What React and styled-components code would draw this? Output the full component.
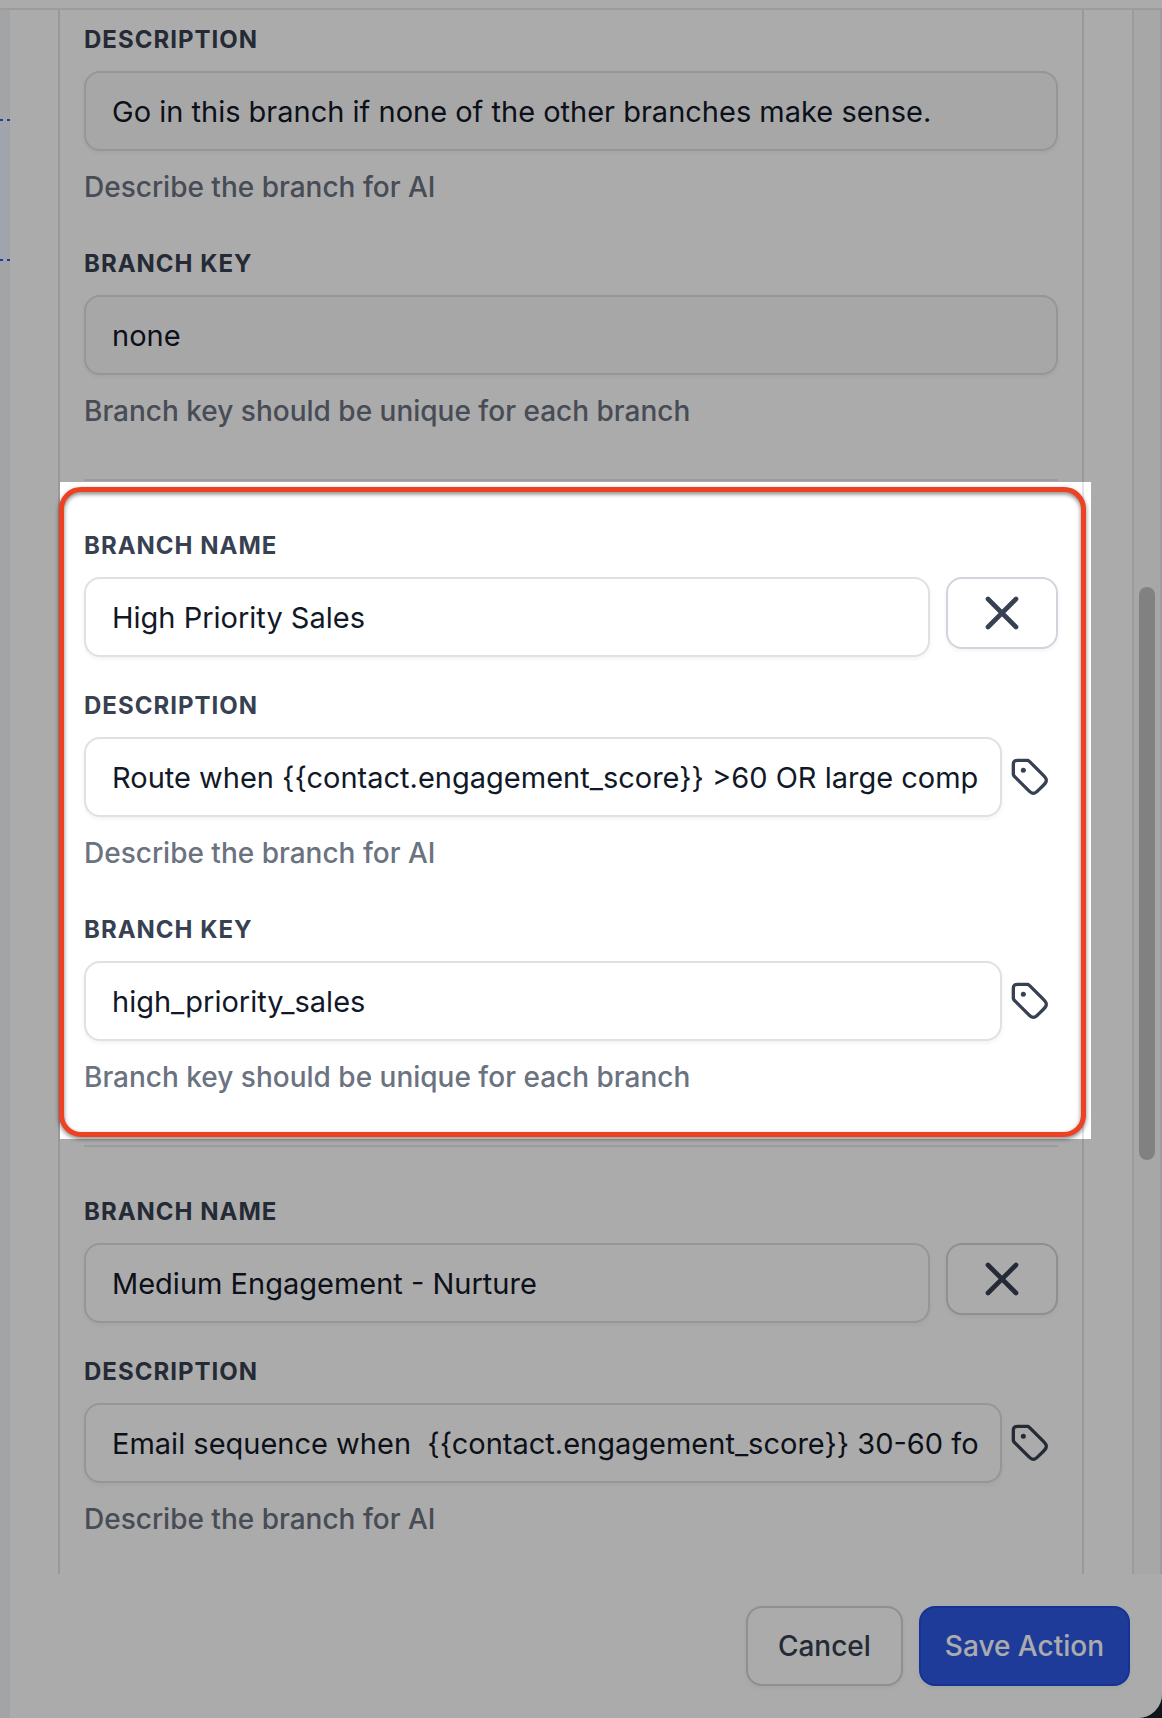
import React, { useId, useState } from "react";
import styled, { createGlobalStyle, css } from "styled-components";

const GlobalStyle = createGlobalStyle`
  *, *::before, *::after { box-sizing: border-box; }
  body {
    margin: 0;
    background: #10151c;
    font-family: Inter, "Liberation Sans", sans-serif;
    font-size: 28px;
    line-height: 40px;
    color: #111827;
  }
  input, button { font: inherit; }
`;

const Page = styled.div`
  position: relative;
  display: flex;
  flex-direction: column;
  min-height: 100vh;
  overflow: hidden;
  background: #fff;
  border-radius: 0 0 24px 0;
`;

const TopBar = styled.header`
  height: 10px;
  border-bottom: 2px solid #e9e9ef;
`;

const Main = styled.div`
  flex: 1;
  display: flex;
`;

const Canvas = styled.aside`
  width: 10px;
  background: #f3f5f8;
`;

const dashes = "repeating-linear-gradient(90deg, #2f5cec 0 3px, transparent 3px 7px)";

const CanvasNode = styled.div`
  height: 142px;
  margin-top: 109px;
  background: ${dashes} top / 100% 2px no-repeat, ${dashes} bottom / 100% 2px no-repeat, #eff6ff;
`;

const Panel = styled.main`
  flex: 1;
  min-width: 0;
  display: flex;
  flex-direction: column;
`;

const ScrollArea = styled.div`
  flex: 1;
  display: flex;
`;

const Form = styled.form`
  flex: 1;
  min-width: 0;
  margin: 0 48px;
  padding: 13px 24px 0;
  border: solid #e5e5ea;
  border-width: 0 2px;
`;

const ScrollTrack = styled.div`
  width: 30px;
  display: grid;
  grid-template-rows: 577fr 573fr 414fr;
  justify-items: center;
  background: #fafafa;
  border: solid #e8e8e8;
  border-width: 0 2px;
`;

const ScrollThumb = styled.div`
  grid-row: 2;
  width: 16px;
  border-radius: 8px;
  background: #c1c1c1;
`;

const Group = styled.section`
  position: relative;
  padding-bottom: ${(p) => (p.$last ? 0 : 48)}px;
  ${(p) =>
    !p.$first &&
    css`
      padding-top: 48px;
      border-top: 2px solid #e9e9ef;
    `}
`;

const FieldBox = styled.div`
  display: flex;
  flex-direction: column;
  &:not(:first-child) { margin-top: ${(p) => (p.$tight ? 32 : 40)}px; }
`;

const Label = styled.label`
  margin-bottom: 14px;
  font-size: 24px;
  line-height: 34px;
  font-weight: 700;
  letter-spacing: 1px;
  text-transform: uppercase;
  color: #374151;
`;

const Row = styled.div`
  display: flex;
  align-items: ${(p) => (p.$top ? "flex-start" : "center")};
  gap: ${(p) => (p.$top ? 16 : 0)}px;
`;

const Input = styled.input`
  flex: 1;
  min-width: 0;
  height: 80px;
  padding: 0 22px 0 26px;
  border: 2px solid #e0e0e6;
  border-radius: 16px;
  background: #fff;
  color: #111827;
  font-size: 29px;
  box-shadow: 0 2px 4px rgba(16, 24, 40, 0.05);
  outline: none;
  &:read-only { background: #fafafa; }
`;

const Help = styled.p`
  margin: 16px 0 0;
  font-weight: 500;
  color: #6b7280;
`;

const Button = styled.button`
  height: 80px;
  padding: 0 ${(p) => (p.$primary ? 24 : 30)}px;
  border: 2px solid ${(p) => (p.$primary ? "#1f4de0" : "#d1d5db")};
  border-radius: 16px;
  background: ${(p) => (p.$primary ? "#2e59e6" : "#fff")};
  color: ${(p) => (p.$primary ? "#fff" : "#374151")};
  font-weight: 500;
  box-shadow: 0 2px 4px rgba(16, 24, 40, 0.05);
`;

const RemoveButton = styled(Button)`
  display: flex;
  align-items: center;
  justify-content: center;
  width: 112px;
  height: 72px;
  padding: 0;
`;

const TagButton = styled.button`
  display: flex;
  padding: 8px;
  border: 0;
  background: none;
  color: #374151;
`;

const Footer = styled.footer`
  display: flex;
  justify-content: flex-end;
  gap: 16px;
  padding: 32px;
`;

const Spotlight = styled.div`
  position: absolute;
  z-index: 1;
  inset: 1px -33px 6px -24px;
  box-shadow: 0 0 0 4000px rgba(0, 0, 0, 0.33);
  pointer-events: none;
`;

const Outline = styled.div`
  position: absolute;
  z-index: 2;
  inset: 6px -28px 8px -25px;
  border: 5px solid #ed4124;
  border-radius: 22px;
  filter: drop-shadow(0 2px 2px rgba(0, 0, 0, 0.5));
  pointer-events: none;
`;

const CloseIcon = () => (
  <svg width="56" height="56" viewBox="0 0 24 24" fill="none" stroke="currentColor" strokeWidth="2" strokeLinecap="round" aria-hidden="true">
    <path d="M18 6L6 18M6 6l12 12" />
  </svg>
);

const TagIcon = () => (
  <svg width="40" height="40" viewBox="0 0 24 24" fill="none" stroke="currentColor" strokeWidth="2" strokeLinecap="round" strokeLinejoin="round" aria-hidden="true">
    <circle cx="8" cy="8" r="1.5" fill="currentColor" stroke="none" />
    <path d="M2 5.2V9.6745C2 10.1637 2 10.4083 2.0553 10.6385C2.1043 10.8425 2.1851 11.0376 2.2947 11.2166C2.4184 11.4184 2.5914 11.5914 2.9373 11.9373L10.6059 19.6059C11.7939 20.7939 12.388 21.388 13.0729 21.6105C13.6755 21.8063 14.3245 21.8063 14.927 21.6105C15.612 21.388 16.2061 20.7939 17.3941 19.6059L19.6059 17.3941C20.7939 16.2061 21.388 15.612 21.6105 14.927C21.8063 14.3245 21.8063 13.6755 21.6105 13.0729C21.388 12.388 20.7939 11.7939 19.6059 10.6059L11.9373 2.9373C11.5914 2.5914 11.4184 2.4184 11.2166 2.2947C11.0376 2.1851 10.8425 2.1043 10.6385 2.0553C10.4083 2 10.1637 2 9.6745 2H5.2C4.0799 2 3.5198 2 3.092 2.218C2.7157 2.4097 2.4097 2.7157 2.218 3.092C2 3.5198 2 4.0799 2 5.2Z" />
  </svg>
);

function Field({ label, value, help, tag, removable, readOnly, tight }) {
  const id = useId();
  const [text, setText] = useState(value);
  return (
    <FieldBox $tight={tight}>
      <Label htmlFor={id}>{label}</Label>
      <Row $top={removable}>
        <Input id={id} value={text} readOnly={readOnly} onChange={(e) => setText(e.target.value)} />
        {removable && (
          <RemoveButton type="button" aria-label="Remove branch">
            <CloseIcon />
          </RemoveButton>
        )}
        {tag && (
          <TagButton type="button" aria-label="Insert tag">
            <TagIcon />
          </TagButton>
        )}
      </Row>
      {help && <Help>{help}</Help>}
    </FieldBox>
  );
}

const DESCRIPTION_HELP = "Describe the branch for AI";
const KEY_HELP = "Branch key should be unique for each branch";

export default function App() {
  return (
    <>
      <GlobalStyle />
      <Page>
        <TopBar />
        <Main>
          <Canvas>
            <CanvasNode />
          </Canvas>
          <Panel>
            <ScrollArea>
              <Form id="branches">
                <Group $first>
                  <Field label="Description" value="Go in this branch if none of the other branches make sense." help={DESCRIPTION_HELP} readOnly />
                  <Field label="Branch key" value="none" help={KEY_HELP} readOnly />
                </Group>
                <Group>
                  <Field label="Branch name" value="High Priority Sales" removable />
                  <Field label="Description" value="Route when {{contact.engagement_score}} >60 OR large comp" help={DESCRIPTION_HELP} tag tight />
                  <Field label="Branch key" value="high_priority_sales" help={KEY_HELP} tag />
                  <Spotlight />
                  <Outline />
                </Group>
                <Group $last>
                  <Field label="Branch name" value="Medium Engagement - Nurture" removable />
                  <Field label="Description" value="Email sequence when  {{contact.engagement_score}} 30-60 fo" help={DESCRIPTION_HELP} tag tight />
                </Group>
              </Form>
              <ScrollTrack>
                <ScrollThumb />
              </ScrollTrack>
            </ScrollArea>
            <Footer>
              <Button type="button">Cancel</Button>
              <Button type="submit" form="branches" $primary>
                Save Action
              </Button>
            </Footer>
          </Panel>
        </Main>
      </Page>
    </>
  );
}
